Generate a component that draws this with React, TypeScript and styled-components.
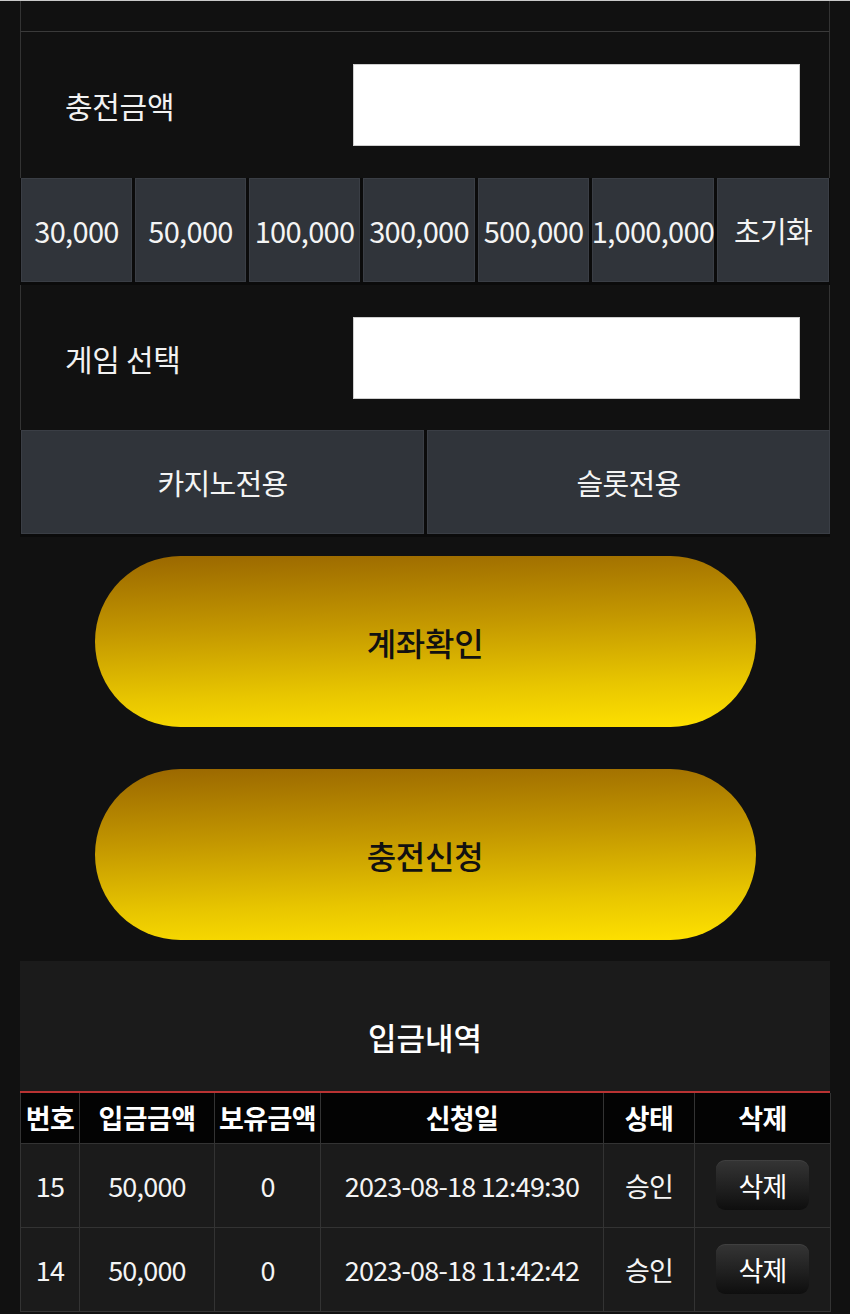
import React from "react";
import styled, { createGlobalStyle } from "styled-components";

const Global = createGlobalStyle`
  html, body { margin: 0; padding: 0; background: #111111; }
  body { font-family: "Noto Sans CJK KR", "Noto Sans", sans-serif; color: #fff; }
  * { box-sizing: border-box; }
`;

const Page = styled.div`
  width: 850px;
  min-height: 1314px;
  background: #111111;
  border-top: 1px solid #c9c9c9;
  padding: 0 20px;
  overflow: hidden;
`;

const Frame = styled.div`
  width: 810px;
  display: flex;
  flex-direction: column;
`;

const TopStrip = styled.div`
  height: 31px;
  border-left: 1px solid #333;
  border-right: 1px solid #333;
  border-bottom: 1px solid #3a3a3a;
  background: #111;
`;

const FieldRow = styled.div<{ $h: number }>`
  height: ${(p) => p.$h}px;
  display: grid;
  grid-template-columns: 332px 1fr;
  align-items: center;
  padding-right: 29px;
  border-left: 1px solid #333;
  border-right: 1px solid #333;
  background: #111;
`;

const Label = styled.div`
  padding-left: 44px;
  font-size: 30px;
  color: #f2f2f2;
  letter-spacing: -0.3px;
`;

const Input = styled.div`
  height: 82px;
  background: #fff;
  border: 1px solid #cfcfcf;
`;

const ButtonStrip = styled.div`
  display: flex;
  gap: 3px;
  background: #0b0b0b;
  padding: 0 0 3px 1px;
`;

const AmountBtn = styled.div<{ $w: number }>`
  width: ${(p) => p.$w}px;
  height: 104px;
  background: #30343a;
  border: 1px solid #3a3e45;
  display: flex;
  align-items: center;
  justify-content: center;
  font-size: 29px;
  color: #f4f4f4;
  letter-spacing: -0.7px;
  white-space: nowrap;
`;

const GameBtn = styled(AmountBtn)`
  flex: 1;
  width: auto;
`;

const Actions = styled.div`
  display: flex;
  flex-direction: column;
  align-items: center;
  gap: 42px;
  padding: 19px 0 21px;
`;

const GoldButton = styled.div`
  width: 661px;
  height: 171px;
  border-radius: 86px;
  background: linear-gradient(178deg, #9a6700 0%, #c39700 40%, #e8c600 75%, #ffe200 100%);
  display: flex;
  align-items: center;
  justify-content: center;
  font-size: 32px;
  font-weight: 500;
  color: #111;
  letter-spacing: -0.3px;
`;

const History = styled.div`
  background: #1b1b1b;
`;

const HistoryTitle = styled.div`
  height: 132px;
  display: flex;
  align-items: center;
  justify-content: center;
  padding-top: 20px;
  font-size: 31px;
  font-weight: 500;
  color: #fff;
  border-bottom: 2px solid #b83232;
`;

const Table = styled.table`
  width: 810px;
  border-collapse: collapse;
  table-layout: fixed;
`;

const Th = styled.th<{ $w: number }>`
  width: ${(p) => p.$w}px;
  height: 50px;
  background: #030303;
  color: #fff;
  font-size: 27px;
  font-weight: 700;
  border-left: 1px solid #333;
  border-right: 1px solid #333;
  padding: 0;
  letter-spacing: -0.6px;
  white-space: nowrap;
`;

const Td = styled.td`
  height: 84px;
  background: #1b1b1b;
  color: #f4f4f4;
  font-size: 27px;
  text-align: center;
  border: 1px solid #333;
  padding: 0;
  letter-spacing: -0.8px;
  white-space: nowrap;
`;

const DeleteBtn = styled.div`
  display: inline-flex;
  align-items: center;
  justify-content: center;
  width: 93px;
  height: 50px;
  border-radius: 9px;
  background: linear-gradient(180deg, #353535 0%, #1e1e1e 60%, #0e0e0e 100%);
  box-shadow: inset 0 1px 0 rgba(255, 255, 255, 0.06);
  color: #fff;
  font-size: 27px;
  vertical-align: middle;
`;

const amounts: [string, number][] = [
  ["30,000", 111],
  ["50,000", 111],
  ["100,000", 111],
  ["300,000", 112],
  ["500,000", 111],
  ["1,000,000", 122],
  ["초기화", 112],
];

const cols: [string, number][] = [
  ["번호", 59],
  ["입금금액", 135],
  ["보유금액", 106],
  ["신청일", 283],
  ["상태", 91],
  ["삭제", 136],
];

const rows = [
  { no: "15", amt: "50,000", bal: "0", date: "2023-08-18 12:49:30", st: "승인" },
  { no: "14", amt: "50,000", bal: "0", date: "2023-08-18 11:42:42", st: "승인" },
];

export default function App() {
  return (
    <>
      <Global />
      <Page>
        <Frame>
          <TopStrip />
          <FieldRow $h={146}>
            <Label>충전금액</Label>
            <Input />
          </FieldRow>
          <ButtonStrip>
            {amounts.map(([t, w]) => (
              <AmountBtn key={t} $w={w}>
                {t}
              </AmountBtn>
            ))}
          </ButtonStrip>
          <FieldRow $h={145}>
            <Label>게임 선택</Label>
            <Input />
          </FieldRow>
          <ButtonStrip>
            <GameBtn $w={0}>카지노전용</GameBtn>
            <GameBtn $w={0}>슬롯전용</GameBtn>
          </ButtonStrip>
          <Actions>
            <GoldButton>계좌확인</GoldButton>
            <GoldButton>충전신청</GoldButton>
          </Actions>
          <History>
            <HistoryTitle>입금내역</HistoryTitle>
            <Table>
              <thead>
                <tr>
                  {cols.map(([t, w]) => (
                    <Th key={t} $w={w}>
                      {t}
                    </Th>
                  ))}
                </tr>
              </thead>
              <tbody>
                {rows.map((r) => (
                  <tr key={r.no}>
                    <Td>{r.no}</Td>
                    <Td>{r.amt}</Td>
                    <Td>{r.bal}</Td>
                    <Td>{r.date}</Td>
                    <Td>{r.st}</Td>
                    <Td>
                      <DeleteBtn>삭제</DeleteBtn>
                    </Td>
                  </tr>
                ))}
              </tbody>
            </Table>
          </History>
        </Frame>
      </Page>
    </>
  );
}
